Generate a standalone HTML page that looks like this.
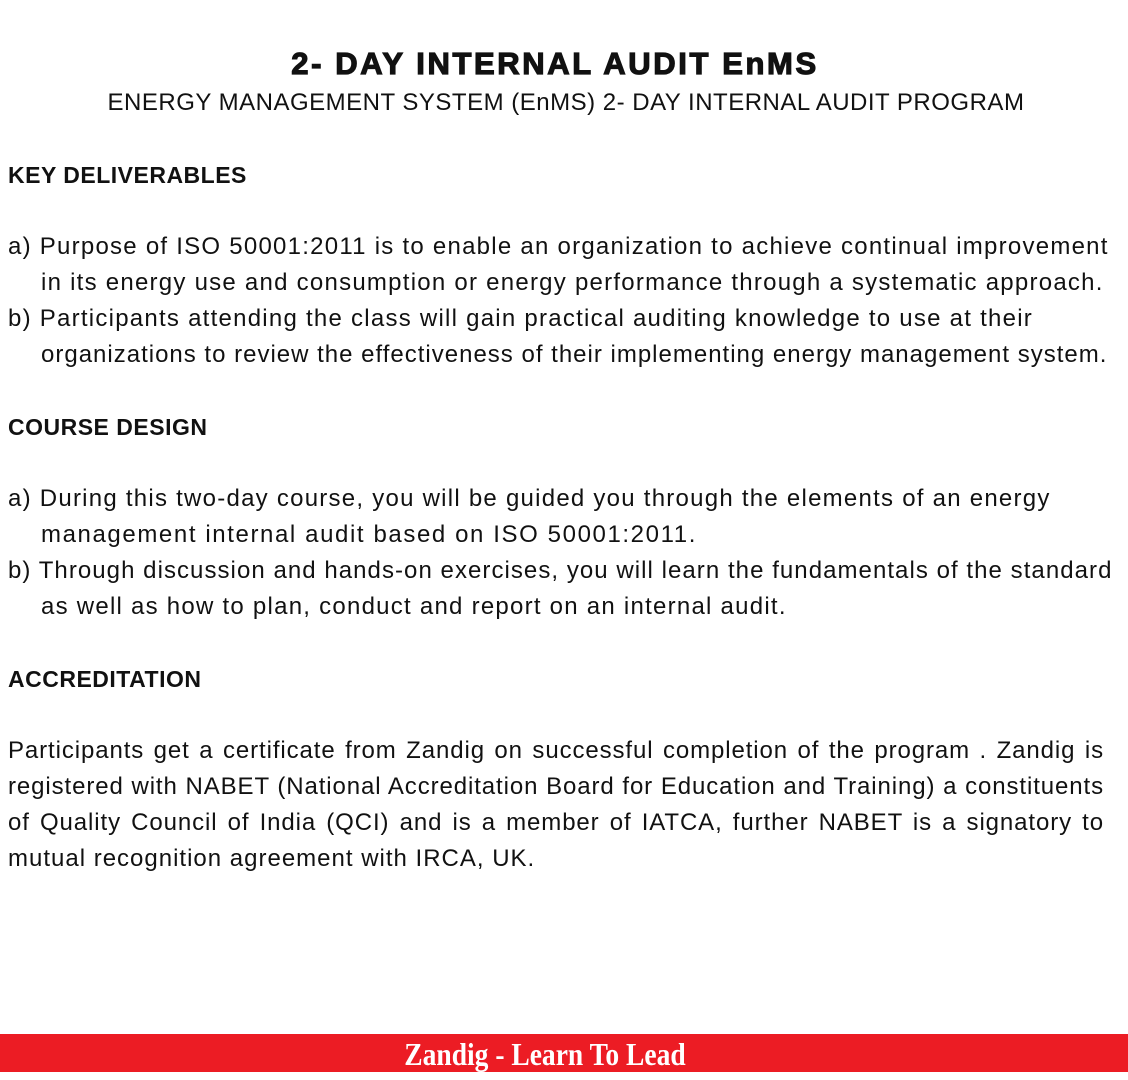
<!DOCTYPE html>
<html><head><meta charset="utf-8"><style>
html,body{margin:0;padding:0;background:#fff;width:1128px;height:1080px;overflow:hidden;position:relative;font-family:"Liberation Sans",sans-serif;color:#111}
.l{position:absolute;white-space:nowrap;font-size:24px;line-height:36px;height:36px;letter-spacing:1.25px}
.h{font-weight:bold;font-size:23px;letter-spacing:0.5px}
.j{width:1096px;text-align:justify;text-align-last:justify;letter-spacing:0.9px}
.t{position:absolute;left:0;width:1110px;text-align:center;white-space:nowrap}
.bar{position:absolute;left:0;top:1034px;width:1128px;height:38px;background:#ec1c24}
.bar span{position:absolute;left:545px;top:0;transform:translateX(-50%) scaleX(0.86);color:#fff;font-family:"Liberation Serif",serif;font-weight:bold;font-size:32px;line-height:40px;white-space:nowrap}
</style></head><body>
<div class="t" style="top:44px;font-size:31px;font-weight:900;letter-spacing:2.6px;-webkit-text-stroke:1.2px #111;line-height:40px">2- DAY INTERNAL AUDIT EnMS</div>
<div class="t" style="top:85px;left:11px;font-size:24px;line-height:36px;letter-spacing:0.5px">ENERGY MANAGEMENT SYSTEM (EnMS) 2- DAY INTERNAL AUDIT PROGRAM</div>

<div class="l h" style="left:8px;top:157px">KEY DELIVERABLES</div>
<div class="l" style="left:8px;top:229px">a) Purpose of ISO 50001:2011 is to enable an organization to achieve continual improvement</div>
<div class="l" style="left:41px;top:265px">in its energy use and consumption or energy performance through a systematic approach.</div>
<div class="l" style="left:8px;top:301px">b) Participants attending the class will gain practical auditing knowledge to use at their</div>
<div class="l" style="left:41px;top:337px;letter-spacing:1.0px">organizations to review the effectiveness of their implementing energy management system.</div>

<div class="l h" style="left:8px;top:409px">COURSE DESIGN</div>
<div class="l" style="left:8px;top:481px">a) During this two-day course, you will be guided you through the elements of an energy</div>
<div class="l" style="left:41px;top:517px;letter-spacing:1.6px">management internal audit based on ISO 50001:2011.</div>
<div class="l" style="left:8px;top:553px;letter-spacing:1.05px">b) Through discussion and hands-on exercises, you will learn the fundamentals of the standard</div>
<div class="l" style="left:41px;top:589px">as well as how to plan, conduct and report on an internal audit.</div>

<div class="l h" style="left:8px;top:661px">ACCREDITATION</div>
<div class="l j" style="left:8px;top:733px">Participants get a certificate from Zandig on successful completion of the program . Zandig is</div>
<div class="l j" style="left:8px;top:769px">registered with NABET (National Accreditation Board for Education and Training) a constituents</div>
<div class="l j" style="left:8px;top:805px">of Quality Council of India (QCI) and is a member of IATCA, further NABET is a signatory to</div>
<div class="l" style="left:8px;top:841px;letter-spacing:1.0px">mutual recognition agreement with IRCA, UK.</div>

<div class="bar"><span>Zandig - Learn To Lead</span></div>
</body></html>
